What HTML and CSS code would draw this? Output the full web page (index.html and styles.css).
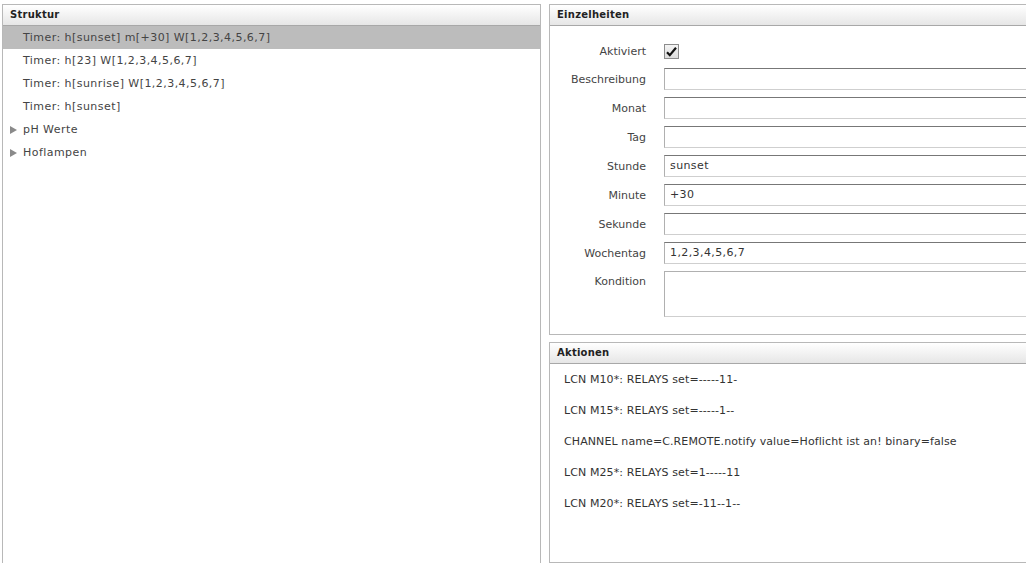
FILE: index.html
```html
<!DOCTYPE html>
<html lang="de">
<head>
<meta charset="utf-8">
<title>Timer</title>
<link rel="stylesheet" href="styles.css">
</head>
<body>
<div class="page">
  <section class="panel tree-panel">
    <div class="panel-header">Struktur</div>
    <ul class="tree">
      <li class="node leaf selected">Timer: h[sunset] m[+30] W[1,2,3,4,5,6,7]</li>
      <li class="node leaf">Timer: h[23] W[1,2,3,4,5,6,7]</li>
      <li class="node leaf">Timer: h[sunrise] W[1,2,3,4,5,6,7]</li>
      <li class="node leaf">Timer: h[sunset]</li>
      <li class="node folder"><span class="arrow"></span>pH Werte</li>
      <li class="node folder"><span class="arrow"></span>Hoflampen</li>
    </ul>
  </section>
  <div class="right-col">
    <section class="panel detail-panel">
      <div class="panel-header">Einzelheiten</div>
      <div class="form">
        <div class="row check-row">
          <label class="lbl">Aktiviert</label>
          <span class="checkbox"><svg width="11" height="10" viewBox="0 0 11 10"><path d="M1 5.2 L3.8 8.2 L10 0.8" fill="none" stroke="#111" stroke-width="2.2"/></svg></span>
        </div>
        <div class="row"><label class="lbl">Beschreibung</label><div class="field"></div></div>
        <div class="row"><label class="lbl">Monat</label><div class="field"></div></div>
        <div class="row"><label class="lbl">Tag</label><div class="field"></div></div>
        <div class="row"><label class="lbl">Stunde</label><div class="field">sunset</div></div>
        <div class="row"><label class="lbl">Minute</label><div class="field">+30</div></div>
        <div class="row"><label class="lbl">Sekunde</label><div class="field"></div></div>
        <div class="row"><label class="lbl">Wochentag</label><div class="field">1,2,3,4,5,6,7</div></div>
        <div class="row area-row"><label class="lbl">Kondition</label><div class="field area"></div></div>
      </div>
    </section>
    <section class="panel action-panel">
      <div class="panel-header">Aktionen</div>
      <ul class="actions">
        <li>LCN M10*: RELAYS set=-----11-</li>
        <li>LCN M15*: RELAYS set=-----1--</li>
        <li>CHANNEL name=C.REMOTE.notify value=Hoflicht ist an! binary=false</li>
        <li>LCN M25*: RELAYS set=1-----11</li>
        <li>LCN M20*: RELAYS set=-11--1--</li>
      </ul>
    </section>
  </div>
</div>
</body>
</html>
```

FILE: styles.css
```css
html, body {
  margin: 0;
  padding: 0;
  background: #fff;
  overflow: hidden;
}
body {
  width: 1026px;
  height: 563px;
  font-family: "DejaVu Sans", Verdana, sans-serif;
  font-size: 11px;
  color: #333;
}
.page {
  display: flex;
  gap: 8px;
  padding: 4px 0 0 2px;
  height: 563px;
  box-sizing: border-box;
  overflow: hidden;
}
.panel {
  border: 1px solid #b8b8b8;
  background: #fff;
  box-sizing: border-box;
}
.panel-header {
  height: 21px;
  line-height: 20px;
  padding-left: 7px;
  font-size: 10px;
  letter-spacing: 0.25px;
  font-weight: bold;
  color: #222;
  background: linear-gradient(#ffffff, #e6e6e6);
  border-bottom: 1px solid #a8a8a8;
  box-sizing: border-box;
}
.tree-panel {
  width: 539px;
  flex: none;
  height: 620px;
}
.tree {
  list-style: none;
  margin: 0;
  padding: 0;
}
.node {
  height: 23px;
  line-height: 23px;
  color: #444;
  display: flex;
  align-items: center;
  white-space: nowrap;
  letter-spacing: 0.45px;
}
.leaf {
  padding-left: 20px;
}
.folder {
  padding-left: 7px;
}
.selected {
  background: #bcbcbc;
}
.arrow {
  width: 0;
  height: 0;
  border-top: 4px solid transparent;
  border-bottom: 4px solid transparent;
  border-left: 7px solid #8a8a8a;
  margin-right: 6px;
}
.right-col {
  width: 520px;
  flex: none;
  display: flex;
  flex-direction: column;
  gap: 7px;
}
.detail-panel {
  height: 331px;
  flex: none;
}
.form {
  padding-top: 18px;
  display: flex;
  flex-direction: column;
  gap: 7px;
}
.row {
  display: flex;
  align-items: center;
  height: 22px;
}
.check-row {
  height: 15px;
  margin-bottom: 2px;
}
.lbl {
  width: 96px;
  text-align: right;
  color: #444;
  flex: none;
}
.checkbox {
  margin-left: 18px;
  width: 13px;
  height: 13px;
  border: 1px solid #8c8c8c;
  background: linear-gradient(#f4f4f4, #dcdcdc);
  display: flex;
  align-items: center;
  justify-content: center;
}
.field {
  margin-left: 18px;
  width: 400px;
  height: 22px;
  box-sizing: border-box;
  border: 1px solid #cfcfcf;
  border-top-color: #777;
  border-left-color: #b0b0b0;
  padding-left: 5px;
  line-height: 20px;
  color: #333;
  letter-spacing: 0.4px;
  flex: none;
}
.area-row {
  height: 46px;
  align-items: flex-start;
}
.area-row .lbl {
  padding-top: 4px;
}
.area {
  height: 46px;
  border-top-color: #b0b0b0;
}
.action-panel {
  flex: 1;
}
.actions {
  list-style: none;
  margin: 0;
  padding: 0 0 0 14px;
}
.actions li {
  height: 31px;
  line-height: 31px;
  color: #333;
  white-space: nowrap;
  letter-spacing: 0.1px;
}
```
